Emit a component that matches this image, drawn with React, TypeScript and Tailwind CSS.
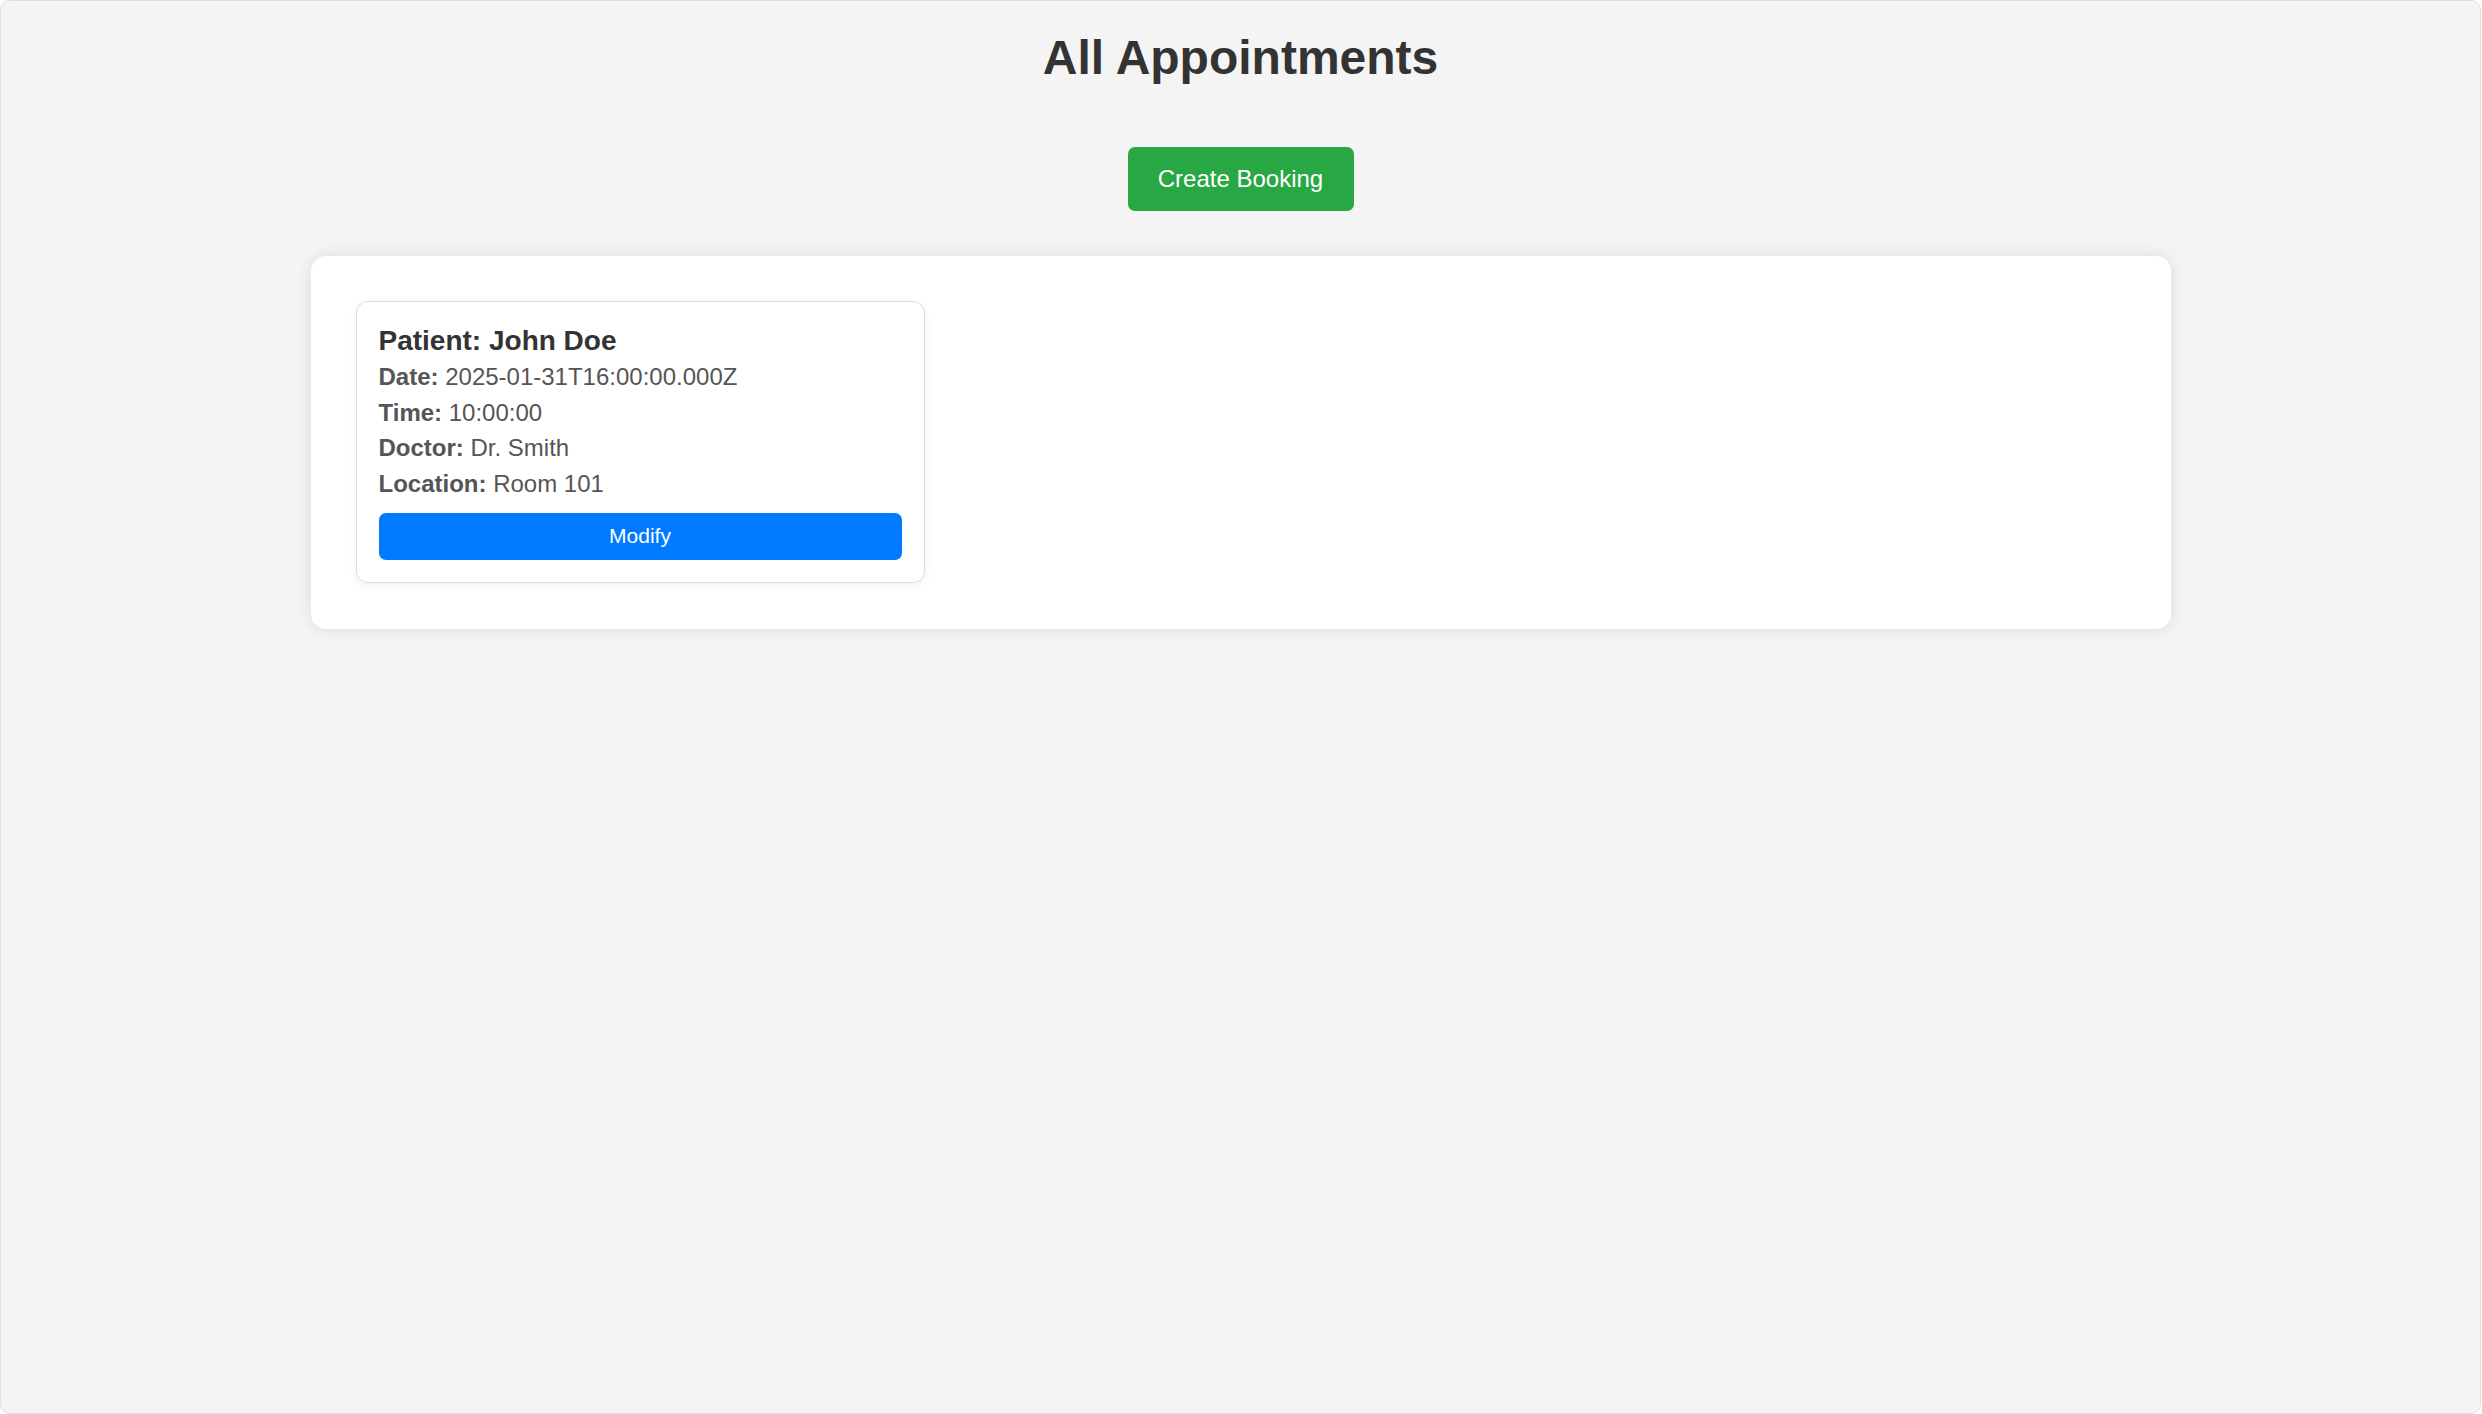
import React from "react";

export default function App() {
  const rows: [string, string][] = [
    ["Date:", "2025-01-31T16:00:00.000Z"],
    ["Time:", "10:00:00"],
    ["Doctor:", "Dr. Smith"],
    ["Location:", "Room 101"],
  ];
  return (
    <div className="w-full h-[1414px] bg-white">
      <div
        className="w-[2481px] h-[1414px] bg-[#f4f4f4] border border-[#dedede] rounded-[10px] flex flex-col items-center text-[#333]"
        style={{ fontFamily: '"Liberation Sans", Arial, sans-serif' }}
      >
        <h1 className="mt-[29px] text-[48px] leading-[55px] font-bold text-[#333]">All Appointments</h1>
        <button className="mt-[62px] w-[226px] h-[64px] bg-[#28a745] text-white text-[24px] rounded-[7px]">
          Create Booking
        </button>
        <div className="mt-[45px] w-[1860px] bg-white rounded-[15px] shadow-[0_0_15px_rgba(0,0,0,0.1)] pt-[30px] px-[30px] pb-[31px]">
          <div className="m-[15px] w-[569px] border border-[#dddddd] rounded-[12px] bg-white shadow-[0_3px_8px_rgba(0,0,0,0.06)] pt-[23px] px-[22px] pb-[22px]">
            <h3 className="text-[28px] leading-[32px] font-bold text-[#333]">Patient: John Doe</h3>
            <div className="mt-[6px] flex flex-col gap-[8.07px]">
              {rows.map(([k, v]) => (
                <p key={k} className="text-[24px] leading-[27.6px] text-[#555]">
                  <span className="font-bold">{k}</span> {v}
                </p>
              ))}
            </div>
            <button className="mt-[15px] w-full h-[47px] bg-[#007bff] text-white text-[21px] rounded-[7px]">
              Modify
            </button>
          </div>
        </div>
      </div>
    </div>
  );
}
